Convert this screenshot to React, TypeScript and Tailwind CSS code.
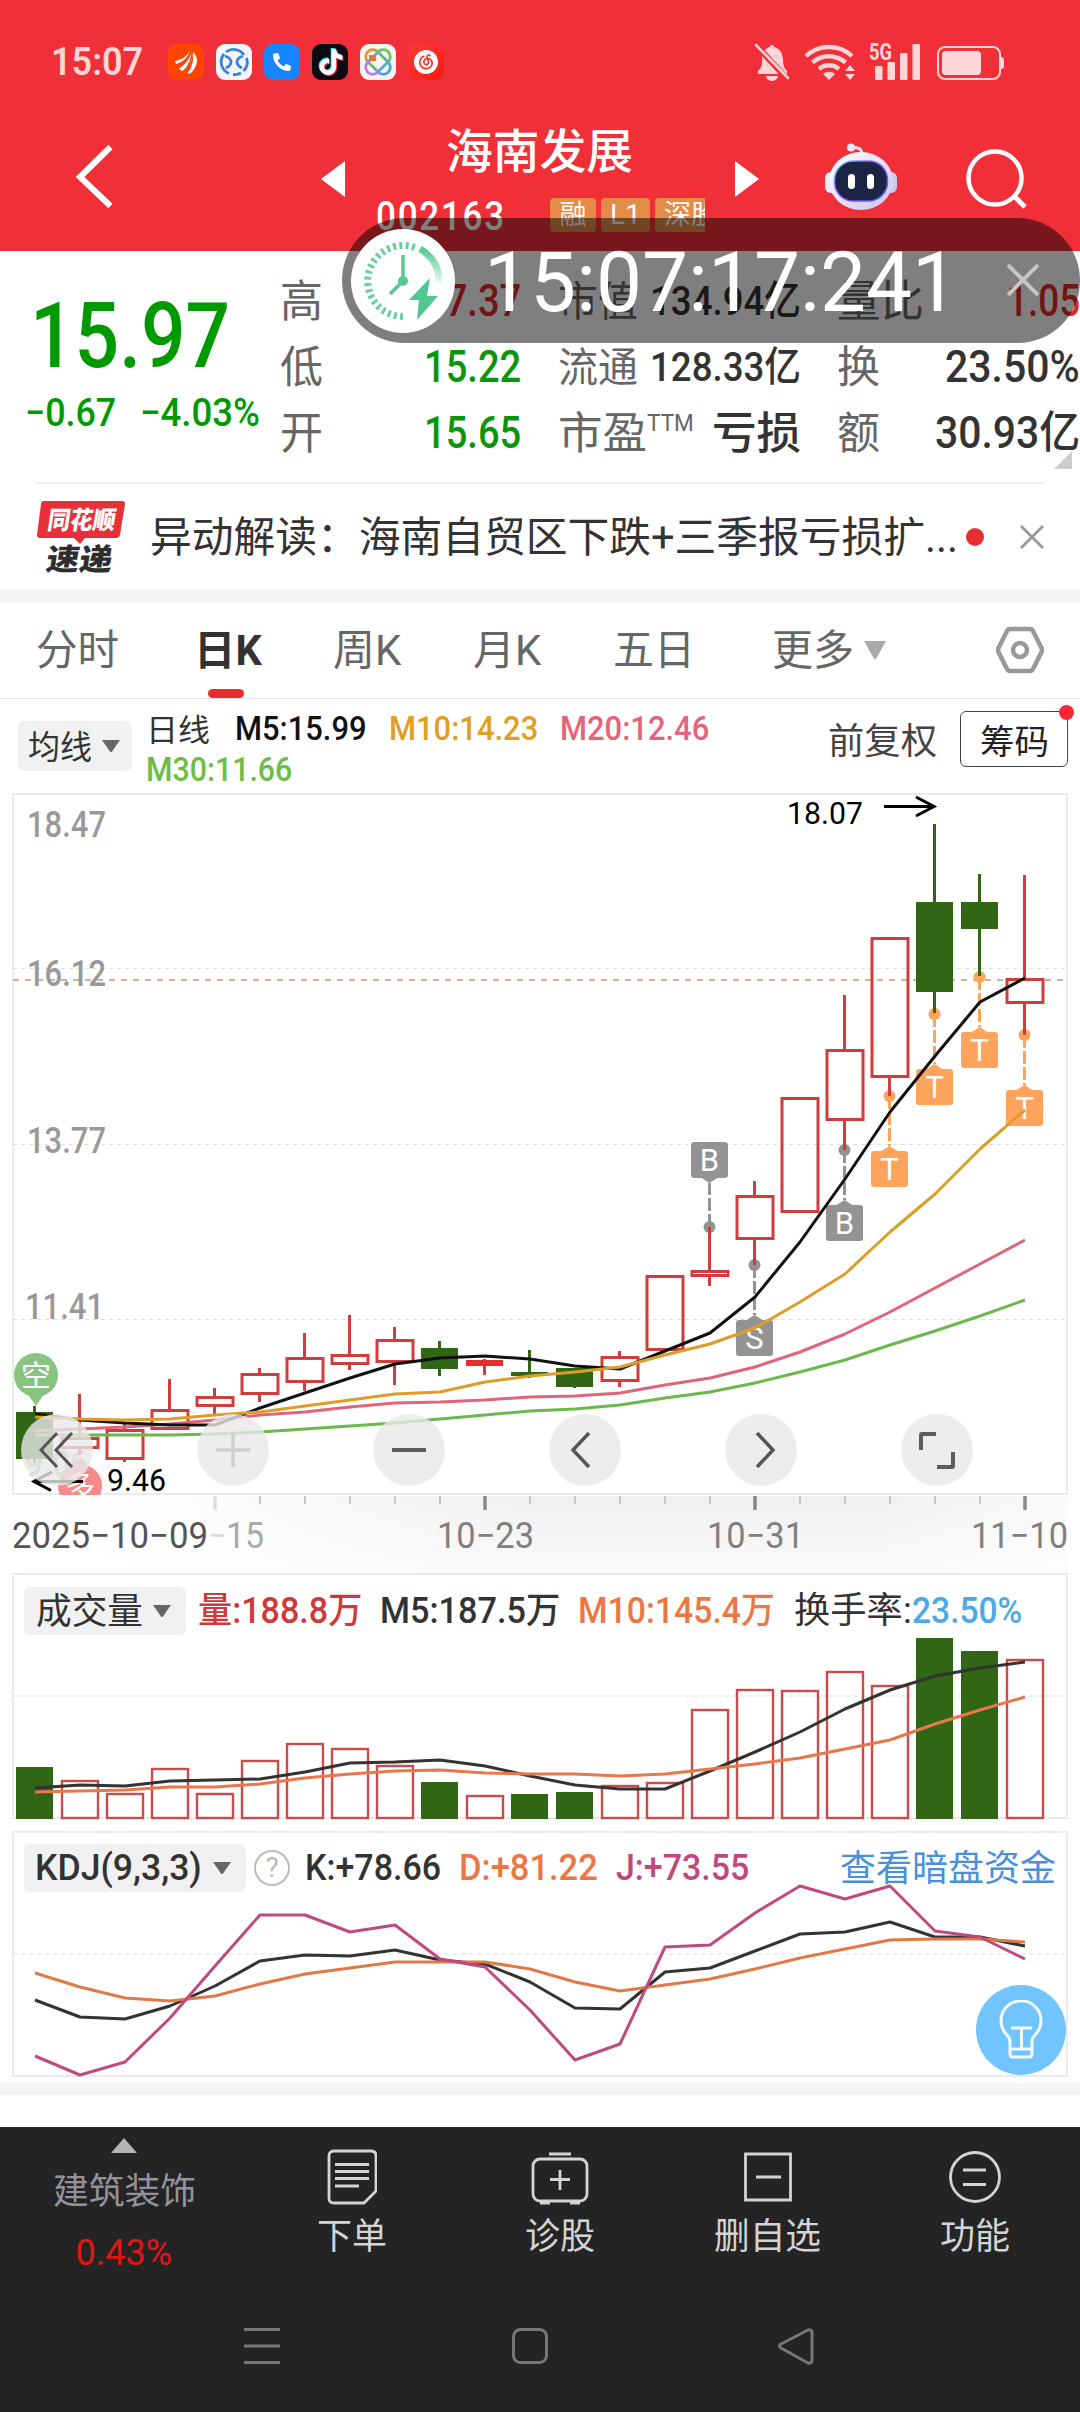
import React, { useLayoutEffect, useRef, useState } from 'react';
import { FaTiktok, FaPhone } from 'react-icons/fa';
import { SiNeteasecloudmusic } from 'react-icons/si';

// Squeezes a run of text horizontally so that it fills the width of its box
function Fit({ className, children }: { className: string; children: React.ReactNode }) {
  const outer = useRef<HTMLSpanElement>(null);
  const inner = useRef<HTMLSpanElement>(null);
  const [scale, setScale] = useState(1);

  useLayoutEffect(() => {
    if (!outer.current || !inner.current) return;
    setScale(outer.current.clientWidth / inner.current.offsetWidth);
  }, [children]);

  return (
    <span ref={outer} className={`block shrink-0 whitespace-nowrap leading-none ${className}`}>
      <span ref={inner} className="inline-block origin-left" style={{ transform: `scaleX(${scale})` }}>
        {children}
      </span>
    </span>
  );
}

type Candle = { up: boolean; high: number; top: number; bottom: number; low: number; filled?: boolean };

const candles: Candle[] = [
  { up: false, high: 1406, top: 1412, bottom: 1459, low: 1463 },
  { up: true, high: 1394, top: 1437, bottom: 1449, low: 1455 },
  { up: true, high: 1424, top: 1429, bottom: 1460, low: 1462 },
  { up: true, high: 1379, top: 1409, bottom: 1430, low: 1430 },
  { up: true, high: 1388, top: 1396, bottom: 1407, low: 1414 },
  { up: true, high: 1368, top: 1373, bottom: 1395, low: 1402 },
  { up: true, high: 1333, top: 1357, bottom: 1383, low: 1391 },
  { up: true, high: 1315, top: 1354, bottom: 1365, low: 1370 },
  { up: true, high: 1327, top: 1339, bottom: 1363, low: 1385 },
  { up: false, high: 1341, top: 1348, bottom: 1369, low: 1376 },
  { up: true, high: 1359, top: 1360, bottom: 1366, low: 1375, filled: true },
  { up: false, high: 1350, top: 1372, bottom: 1376, low: 1378 },
  { up: false, high: 1368, top: 1368, bottom: 1387, low: 1388 },
  { up: true, high: 1351, top: 1356, bottom: 1382, low: 1387 },
  { up: true, high: 1275, top: 1275, bottom: 1351, low: 1351 },
  { up: true, high: 1227, top: 1270, bottom: 1277, low: 1286 },
  { up: true, high: 1181, top: 1195, bottom: 1240, low: 1265 },
  { up: true, high: 1097, top: 1097, bottom: 1213, low: 1213 },
  { up: true, high: 995, top: 1049, bottom: 1121, low: 1150 },
  { up: true, high: 937, top: 937, bottom: 1078, low: 1096 },
  { up: false, high: 824, top: 902, bottom: 992, low: 1013 },
  { up: false, high: 874, top: 902, bottom: 929, low: 976 },
  { up: true, high: 875, top: 978, bottom: 1004, low: 1035 },
];

const volumeTops = [
  1767, 1780, 1793, 1768, 1793, 1760, 1743, 1748, 1765, 1782, 1795, 1794, 1792, 1785, 1782, 1709, 1689, 1690, 1671,
  1685, 1638, 1651, 1659,
];

const ma5 = [
  1414, 1420, 1423, 1425, 1425, 1408, 1393, 1378, 1364, 1358, 1356, 1359, 1366, 1369, 1351, 1333, 1297, 1242, 1179,
  1112, 1056, 1002, 978,
];
const ma10 = [
  1417, 1419, 1420, 1419, 1415, 1412, 1406, 1400, 1394, 1392, 1382, 1376, 1372, 1367, 1355, 1344, 1328, 1302, 1274,
  1232, 1194, 1149, 1110,
];
const ma20 = [
  1431, 1429, 1427, 1424, 1420, 1415, 1412, 1407, 1403, 1402, 1400, 1397, 1396, 1393, 1385, 1378, 1367, 1352, 1334,
  1312, 1288, 1264, 1240,
];
const ma30 = [
  1435, 1435, 1435, 1435, 1434, 1432, 1429, 1426, 1423, 1419, 1415, 1411, 1409, 1405, 1398, 1392, 1383, 1372, 1360,
  1345, 1331, 1316, 1300,
];
const vol5 = [
  1788, 1785, 1786, 1781, 1780, 1779, 1772, 1763, 1762, 1760, 1766, 1776, 1785, 1789, 1789, 1771, 1752, 1732, 1709,
  1690, 1676, 1668, 1662,
];
const vol10 = [
  1792, 1791, 1790, 1787, 1787, 1784, 1778, 1774, 1771, 1770, 1773, 1774, 1774, 1776, 1774, 1769, 1764, 1758, 1749,
  1740, 1724, 1710, 1697,
];
const kLine = [
  2000, 2017, 2019, 2006, 1986, 1961, 1955, 1956, 1950, 1960, 1964, 1982, 2008, 2009, 1972, 1968, 1951, 1934, 1932,
  1922, 1937, 1937, 1946,
];
const dLine = [
  1973, 1987, 1998, 2001, 1996, 1984, 1974, 1968, 1962, 1962, 1962, 1969, 1982, 1991, 1985, 1979, 1969, 1958, 1949,
  1940, 1939, 1939, 1942,
];
const jLine = [
  2056, 2075, 2062, 2018, 1966, 1915, 1915, 1932, 1925, 1959, 1967, 2010, 2060, 2044, 1947, 1945, 1913, 1886, 1899,
  1886, 1931, 1937, 1959,
];

const marks = [
  { i: 15, dot: 1227, letter: 'B', above: true, color: '#939393' },
  { i: 16, dot: 1265, letter: 'S', above: false, color: '#939393' },
  { i: 18, dot: 1150, letter: 'B', above: false, color: '#939393' },
  { i: 19, dot: 1096, letter: 'T', above: false, color: '#ffa45c' },
  { i: 20, dot: 1014, letter: 'T', above: false, color: '#ffa45c' },
  { i: 21, dot: 977, letter: 'T', above: false, color: '#ffa45c' },
  { i: 22, dot: 1035, letter: 'T', above: false, color: '#ffa45c' },
];

const RED = '#d23c3c';
const GREEN = '#306614';

const xOf = (i: number) => 35 + i * 45;

function Line({ data, color }: { data: number[]; color: string }) {
  return (
    <polyline
      points={data.map((y, i) => `${xOf(i)},${y}`).join(' ')}
      fill="none"
      stroke={color}
      strokeWidth={3}
      strokeLinejoin="round"
    />
  );
}

function StatusBar() {
  return (
    <div className="flex h-[124px] items-center pl-[51px]">
      <Fit className="w-[92px] text-[38px] font-semibold text-[#ffd5d7]">15:07</Fit>
      <div className="ml-[25px] flex gap-3">
        <span className="flex size-9 items-center justify-center rounded-[9px] bg-[#ff4400]">
          <svg viewBox="0 0 36 36" className="size-9" fill="#fff">
            <path d="M7 17c6-1 11-4 15-10-1 7-7 12-14 13z" />
            <path d="M11 25c6-5 11-10 13-18 2 8-3 16-10 20z" />
            <path d="M19 30c5-7 7-13 6-22 6 6 5 14-2 21z" />
            <path d="M8 21c7-2 12-7 15-14M15 28c6-6 9-12 9-20" stroke="#ff4400" strokeWidth="1.300" fill="none" />
          </svg>
        </span>
        <span className="flex size-9 items-center justify-center rounded-[9px] bg-[#f2f5fa]">
          <svg viewBox="0 0 36 36" className="size-9" fill="none" stroke="#3b83d8" strokeWidth="2.800">
            <path d="M10 8a12.500 12.500 0 0 1 18 3M30.500 14a12.500 12.500 0 0 1-3 13M25 29a12.500 12.500 0 0 1-8 1.500M13 29.500A12.500 12.500 0 0 1 8 10" />
            <path d="M9 12c3 1 6 3 6 6s-3 5-5 6M27 12c-3 1-6 3-6 6s3 5 5 6" />
          </svg>
        </span>
        <span className="flex size-9 items-center justify-center rounded-[9px] bg-[#1685ff]">
          <FaPhone className="size-[18px] -scale-x-100 text-white" />
        </span>
        <span className="relative flex size-9 items-center justify-center rounded-[9px] bg-[#0b0a14]">
          <FaTiktok className="absolute left-[5px] top-[4px] size-[26px] text-[#3de8e4]" />
          <FaTiktok className="absolute left-[7px] top-[6px] size-[26px] text-[#f5385c]" />
          <FaTiktok className="absolute left-[6px] top-[5px] size-[26px] text-white" />
        </span>
        <span className="flex size-9 items-center justify-center rounded-[9px] bg-[#f7f5f4]">
          <svg viewBox="0 0 36 36" className="size-9" fill="none" strokeWidth="2.800">
            <defs>
              <linearGradient id="orbit" x1="0" y1="0" x2="1" y2="0">
                <stop offset="0" stopColor="#f6932d" />
                <stop offset="0.500" stopColor="#58bf6c" />
                <stop offset="1" stopColor="#3aa6ee" />
              </linearGradient>
              <linearGradient id="orbit2" x1="1" y1="0" x2="0" y2="0">
                <stop offset="0" stopColor="#6fcb4b" />
                <stop offset="0.500" stopColor="#5a9ff0" />
                <stop offset="1" stopColor="#d277ea" />
              </linearGradient>
            </defs>
            <rect x="3.500" y="11" width="29" height="14" rx="7" transform="rotate(45 18 18)" stroke="url(#orbit)" />
            <rect x="3.500" y="11" width="29" height="14" rx="7" transform="rotate(-45 18 18)" stroke="url(#orbit2)" />
            <rect x="9" y="11" width="7" height="6" fill="#f0742c" />
          </svg>
        </span>
        <span className="flex size-9 items-center justify-center rounded-[9px] bg-linear-to-br from-[#fb3a34] to-[#fd120e]">
          <SiNeteasecloudmusic className="size-6 text-white" />
        </span>
      </div>
      <svg viewBox="750 38 260 48" className="ml-[306px] h-12 w-[260px]" fill="#ffd5d7">
        <path d="M758 71c5-4 4-9 4-14 1-6 4-9 8-10a2 2 0 0 1 4 0c6 2 8 5 9 12 0 6 1 9 4 12v3h-29z" />
        <path d="M766 76h12a6 5 0 0 1-12 0z" />
        <path d="M754 43l36 39" stroke="#f12f38" strokeWidth="6" />
        <path d="M756 45l32 33" stroke="#ffd5d7" strokeWidth="2.600" strokeLinecap="round" />
        <g fill="none" stroke="#ffd5d7" strokeWidth="4.400">
          <path d="M806 56a34 34 0 0 1 46 0" />
          <path d="M812.500 62.500a25 25 0 0 1 33 0" />
          <path d="M819 69a15 15 0 0 1 20 0" />
        </g>
        <path d="M829 80l-6-6a9 9 0 0 1 12 0z" />
        <path d="M845 71l5-6 5 6zM845 74h10l-5 6z" />
        <rect x="875" y="66" width="7.500" height="14" rx="1" />
        <rect x="887.500" y="62" width="7.500" height="18" rx="1" />
        <rect x="900" y="53" width="7.500" height="27" rx="1" />
        <rect x="912.500" y="44" width="7.500" height="36" rx="1" />
        <text x="869" y="60" fontSize="23" fontWeight="700" textLength="23" lengthAdjust="spacingAndGlyphs">5G</text>
        <rect x="938" y="47" width="62" height="32" rx="7" fill="none" stroke="#ffd5d7" strokeWidth="2" />
        <rect x="942" y="51" width="39" height="24" rx="4" />
        <path d="M1001 57q3 0 3 3v6q0 3-3 3z" />
      </svg>
    </div>
  );
}

function TitleBar() {
  return (
    <div className="flex h-[127px] items-start">
      <svg viewBox="0 0 44 70" className="ml-[72px] mt-[17px] h-[70px] w-11" fill="none" stroke="#fff" strokeWidth="6">
        <path d="M38.500 6L8 36l30.500 29" />
      </svg>
      <svg viewBox="0 0 24 36" className="ml-[205px] mt-[37px] h-9 w-6" fill="#fff">
        <path d="M24 0v36L0 18z" />
      </svg>
      <div className="ml-[31px] w-[329px]">
        <Fit className="ml-[70px] mt-[4px] h-12 w-[187px] text-[47px] font-medium text-white">海南发展</Fit>
        <div className="mt-[17px] flex h-11 items-center text-white">
          <Fit className="mt-[2px] w-[130px] text-[41px] font-medium tracking-[2px]">002163</Fit>
          <div className="ml-[44px] flex w-[155px] gap-[5px] overflow-hidden leading-none">
            <span className="flex h-[34px] w-[46px] shrink-0 items-center justify-center rounded-[4px] bg-[#e48b48] text-[27px]">融</span>
            <span className="flex h-[34px] w-[49px] shrink-0 items-center justify-center rounded-[4px] bg-[#e48b48] text-[28px]">L1</span>
            <span className="flex h-[34px] w-[72px] shrink-0 items-center justify-center rounded-[4px] bg-[#e48b48] text-[27px]">深股</span>
          </div>
        </div>
      </div>
      <svg viewBox="0 0 24 36" className="ml-[30px] mt-[37px] h-9 w-6" fill="#fff">
        <path d="M0 0l24 18L0 36z" />
      </svg>
      <svg viewBox="0 0 72 68" className="ml-[66px] mt-[18px] h-[68px] w-[72px]">
        <defs>
          <linearGradient id="shell" x1="0" y1="0" x2="1" y2="1">
            <stop offset="0" stopColor="#fff" />
            <stop offset="1" stopColor="#c9c6f0" />
          </linearGradient>
          <linearGradient id="rim" x1="0" y1="0" x2="1" y2="1">
            <stop offset="0" stopColor="#6fd6f2" />
            <stop offset="0.500" stopColor="#8a3df0" />
            <stop offset="1" stopColor="#5a6cf0" />
          </linearGradient>
        </defs>
        <path d="M27 6q10-2 10 7" fill="none" stroke="#e9e6ff" strokeWidth="3" />
        <circle cx="26" cy="5.500" r="4" fill="#ece4f8" />
        <rect x="0" y="30" width="12" height="21" rx="6" fill="#ece8fb" />
        <rect x="60" y="30" width="12" height="21" rx="6" fill="#cfcaf2" />
        <ellipse cx="36" cy="39" rx="32" ry="29" fill="url(#shell)" />
        <rect x="9.500" y="19" width="53" height="40" rx="19" fill="#1c2444" stroke="url(#rim)" strokeWidth="1.500" />
        <rect x="23" y="32" width="7" height="15" rx="3.500" fill="#fff" />
        <rect x="42" y="32" width="7" height="15" rx="3.500" fill="#fff" />
      </svg>
      <svg viewBox="0 0 64 64" className="ml-[68px] mt-[23px] size-16" fill="none" stroke="#fff" strokeWidth="4.500">
        <circle cx="30" cy="31" r="26.500" />
        <path d="M49 49l11 11" strokeWidth="5" />
      </svg>
    </div>
  );
}

// Floating clock that sits on top of the page
function FloatingClock() {
  return (
    <div className="absolute left-[342px] top-[218px] flex h-[125px] w-[738px] items-center rounded-full bg-black/50">
      <svg viewBox="0 0 104 104" className="ml-[9px] size-[104px]">
        <defs>
          <linearGradient id="arc" x1="0" y1="0" x2="0" y2="1">
            <stop offset="0" stopColor="#56c992" />
            <stop offset="1" stopColor="#56c992" stopOpacity="0.100" />
          </linearGradient>
        </defs>
        <circle cx="52" cy="52" r="52" fill="#fff" />
        <path d="M52 87.500a35.500 35.500 0 1 1 12-69" fill="none" stroke="#6bce9f" strokeWidth="7" strokeDasharray="3 3.300" />
        <path d="M69 20a36 36 0 0 1 19 34" fill="none" stroke="url(#arc)" strokeWidth="7" />
        <path d="M52 26v26L39 65" fill="none" stroke="#56c992" strokeWidth="3.500" />
        <circle cx="52" cy="52" r="5" fill="#56c992" />
        <path d="M79 49L58 71h10l-2 20 21-24H76z" fill="#50c78e" />
      </svg>
      <Fit className="ml-[29px] mt-1 w-[474px] text-[83px] text-white">15:07:17:241</Fit>
      <svg viewBox="0 0 32 32" className="ml-[49px] mb-0.5 size-8" stroke="#c6c6c6" strokeWidth="4">
        <path d="M1 1l30 30M31 1L1 31" />
      </svg>
    </div>
  );
}

function Quote() {
  return (
    <div className="relative flex h-[231px]">
      <div className="w-[280px] pl-[27px] pt-[40px] text-[#009a00]">
        <Fit className="ml-[3px] h-[91px] w-[200px] text-[91px] font-medium">15.97</Fit>
        <div className="mt-[11px] flex h-10 items-center text-[39px] font-medium">
          <Fit className="-ml-[2px] w-[91px]">−0.67</Fit>
          <Fit className="ml-[24px] w-[120px]">−4.03%</Fit>
        </div>
      </div>
      <div className="flex gap-9 pt-[17px] text-[#333]">
        <div className="w-[241px] text-[44px]">
          <div className="flex h-[66px] items-center justify-between">
            <Fit className="mt-[2px] w-[43px] text-[#666]">高</Fit>
            <Fit className="w-[97px] font-medium text-[#e02828]">17.37</Fit>
          </div>
          <div className="flex h-[66px] items-center justify-between">
            <Fit className="mt-[2px] w-[43px] text-[#666]">低</Fit>
            <Fit className="w-[97px] font-medium text-[#0a960a]">15.22</Fit>
          </div>
          <div className="flex h-[66px] items-center justify-between">
            <Fit className="mt-[2px] w-[43px] text-[#666]">开</Fit>
            <Fit className="w-[97px] font-medium text-[#0a960a]">15.65</Fit>
          </div>
        </div>
        <div className="ml-px w-[243px] text-[41px]">
          <div className="flex h-[66px] items-center justify-between">
            <Fit className="mt-[2px] w-[80px] text-[#666]">市值</Fit>
            <Fit className="w-[151px] font-medium">134.94亿</Fit>
          </div>
          <div className="flex h-[66px] items-center justify-between">
            <Fit className="mt-[2px] w-[80px] text-[#666]">流通</Fit>
            <Fit className="w-[151px] font-medium">128.33亿</Fit>
          </div>
          <div className="flex h-[66px] items-center justify-between">
            <div className="flex items-start text-[#666]">
              <Fit className="mt-[2px] w-[89px] text-[44px]">市盈</Fit>
              <Fit className="mt-[1px] w-[47px] text-[24px]">TTM</Fit>
            </div>
            <Fit className="mt-[2px] w-[89px] text-[44px] font-medium">亏损</Fit>
          </div>
        </div>
        <div className="w-[243px] text-[44px]">
          <div className="flex h-[66px] items-center justify-between">
            <Fit className="mt-[2px] w-[87px] text-[#666]">量比</Fit>
            <Fit className="w-[73px] font-medium text-[#e02828]">1.05</Fit>
          </div>
          <div className="flex h-[66px] items-center justify-between">
            <Fit className="mt-[2px] w-[43px] text-[#666]">换</Fit>
            <Fit className="w-[135px] font-medium">23.50%</Fit>
          </div>
          <div className="flex h-[66px] items-center justify-between">
            <Fit className="mt-[2px] w-[43px] text-[#666]">额</Fit>
            <Fit className="w-[145px] font-medium">30.93亿</Fit>
          </div>
        </div>
      </div>
      <svg viewBox="0 0 18 18" className="absolute bottom-[13px] right-2 size-[18px]" fill="#ccc">
        <path d="M18 0v18H0z" />
      </svg>
    </div>
  );
}

function News() {
  return (
    <div className="mx-9 flex h-[108px] items-center border-t-2 border-[#eee]">
      <div className="w-[90px]">
        <svg viewBox="0 0 90 74" className="h-[74px] w-[90px]">
          <path d="M8 1h78q3 0 3 3l-5 31q-1 3-4 3H49l-5 6-6-6H4q-3 0-3-3L5 4q0-3 3-3z" fill="#e6303a" />
          <g fontWeight="900" transform="skewX(-9)">
            <text x="15" y="29" fontSize="25" fill="#fff" textLength="68" lengthAdjust="spacingAndGlyphs">同花顺</text>
            <text x="20" y="70" fontSize="30" fill="#2e2e2e" textLength="66" lengthAdjust="spacingAndGlyphs">速递</text>
          </g>
        </svg>
      </div>
      <Fit className="ml-[24px] mt-[2px] w-[808px] text-[42px] text-[#333]">异动解读：海南自贸区下跌+三季报亏损扩...</Fit>
      <span className="ml-[8px] size-[18px] rounded-full bg-[#e93030]" />
      <svg viewBox="0 0 24 24" className="ml-auto size-6" stroke="#999" strokeWidth="2.800">
        <path d="M1 1l22 22M23 1L1 23" />
      </svg>
    </div>
  );
}

function Tabs() {
  return (
    <div className="relative flex h-[97px] items-center border-b border-[#e4e4e4] pl-[36px] text-[42px] text-[#666]">
      <Fit className="mt-[2px] w-[83px]">分时</Fit>
      <Fit className="ml-[75px] mt-[2px] w-[68px] font-bold text-[#333]">日K</Fit>
      <Fit className="ml-[71px] mt-[2px] w-[68px]">周K</Fit>
      <Fit className="ml-[72px] mt-[2px] w-[68px]">月K</Fit>
      <Fit className="ml-[72px] mt-[2px] w-[82px]">五日</Fit>
      <Fit className="ml-[77px] mt-[2px] w-[82px]">更多</Fit>
      <svg viewBox="0 0 22 18" className="ml-[10px] h-[18px] w-[22px]" fill="#aaa">
        <path d="M0 0h22L12.500 17q-1.500 2-3 0z" />
      </svg>
      <svg viewBox="0 0 48 48" className="ml-[110px] size-12" fill="none" stroke="#999" strokeWidth="4.500" strokeLinejoin="round">
        <path d="M14 3h20q2 0 3 2l8 16q2 3 0 6l-8 16q-1 2-3 2H14q-2 0-3-2L3 27q-2-3 0-6l8-16q1-2 3-2z" />
        <circle cx="24" cy="24" r="7" />
      </svg>
      <span className="absolute bottom-0 left-[208px] h-[9px] w-9 rounded-full bg-[#e62e2e]" />
    </div>
  );
}

function Caret() {
  return (
    <svg viewBox="0 0 18 12" className="h-3 w-[18px]" fill="#666">
      <path d="M0 0h18L10 11.500q-1 1-2 0z" />
    </svg>
  );
}

function Averages() {
  return (
    <div className="flex h-[94px] items-start">
      <div className="ml-[18px] mt-[22px] flex h-[50px] w-[114px] items-center justify-between rounded-md bg-[#f1f1f1] pl-[10px] pr-3 text-[33px] text-[#333]">
        <Fit className="mt-[2px] w-[64px]">均线</Fit>
        <Caret />
      </div>
      <div className="ml-[14px] mt-[9px] flex h-[82px] w-[620px] flex-wrap content-start items-center font-medium">
        <Fit className="mr-[25px] h-[41px] w-[64px] pt-[7px] text-[31px] font-normal text-[#333]">日线</Fit>
        <Fit className="mr-[22px] h-[41px] w-[132px] pt-1 text-[33px] text-[#111]">M5:15.99</Fit>
        <Fit className="mr-[22px] h-[41px] w-[149px] pt-1 text-[33px] text-[#e09e22]">M10:14.23</Fit>
        <Fit className="h-[41px] w-[149px] pt-1 text-[33px] text-[#e5647a]">M20:12.46</Fit>
        <Fit className="h-[41px] w-[146px] pt-1 text-[33px] text-[#6cbd47]">M30:11.66</Fit>
      </div>
      <Fit className="ml-[62px] mt-[25px] w-[109px] text-[36px] text-[#444]">前复权</Fit>
      <div className="relative ml-[23px] mt-[12px] flex h-14 w-[108px] items-center justify-center rounded-[6px] border border-[#444] text-[34px] text-[#222]">
        <Fit className="mt-[5px] w-[69px]">筹码</Fit>
        <span className="absolute -right-[7px] -top-[7px] size-[15px] rounded-full bg-[#ff2436]" />
      </div>
    </div>
  );
}

const round = 'flex size-[72px] items-center justify-center rounded-full bg-[#e8e8e8]/80';

function PriceChart() {
  return (
    <div className="relative h-[703px]">
      <svg viewBox="0 793 1080 703" className="absolute inset-0 h-[703px] w-full">
        <rect x="13" y="794" width="1054" height="700" fill="none" stroke="#ebebeb" strokeWidth="2" />
        <g stroke="#dedede" strokeDasharray="4 4">
          <path d="M13 968.500H1066M13 1144.500H1066M13 1319.500H1066" />
        </g>
        <path d="M13 980H1064" stroke="#b7a06f" strokeWidth="1.500" strokeDasharray="6 6" />
        <g fill="#999" fontSize="36" fontWeight="500">
          <text x="27" y="837" textLength="79" lengthAdjust="spacingAndGlyphs">18.47</text>
          <text x="27" y="986" textLength="79" lengthAdjust="spacingAndGlyphs">16.12</text>
          <text x="27" y="1153" textLength="79" lengthAdjust="spacingAndGlyphs">13.77</text>
          <text x="25" y="1319" textLength="79" lengthAdjust="spacingAndGlyphs">11.41</text>
          <text x="25" y="1476" textLength="63" lengthAdjust="spacingAndGlyphs" fill="#bbb">9.06</text>
        </g>

        {marks.map((m) => {
          const x = xOf(m.i) - 0.5;
          const top = m.above ? m.dot - 85 : m.dot + 55;
          const tip = m.above ? top + 41 : top - 5;
          const base = m.above ? top + 36 : top;
          return (
            <g key={m.i} fill={m.color}>
              <path d={`M${x} ${m.dot}V${tip}`} stroke={m.color} strokeWidth="3" strokeDasharray="13 3" />
              <circle cx={x} cy={m.dot} r="6" />
              <rect x={x - 18.5} y={top} width="37" height="36" rx="3" />
              <path d={`M${x - 8} ${base}L${x} ${tip}L${x + 8} ${base}z`} />
              <text x={x} y={top + 29} fontSize="31" fill="#fff" textAnchor="middle">
                {m.letter}
              </text>
            </g>
          );
        })}

        {candles.map((c, i) => {
          const x = xOf(i) - 0.5;
          const color = c.up ? RED : GREEN;
          return (
            <g key={i} stroke={color} strokeWidth="3">
              <path d={`M${x} ${c.high}V${c.top}M${x} ${c.bottom}V${c.low}`} />
              {c.up && !c.filled ? (
                <rect x={x - 17.5} y={c.top + 1.5} width="36" height={c.bottom - c.top - 3} fill="none" />
              ) : (
                <rect x={x - 18.5} y={c.top} width="37" height={c.bottom - c.top} fill={c.up ? '#e03030' : color} stroke="none" />
              )}
            </g>
          );
        })}

        <Line data={ma30} color="#6bb84d" />
        <Line data={ma20} color="#e0647a" />
        <Line data={ma5} color="#111" />
        <Line data={ma10} color="#dc9e28" />

        <path d="M36 1406l-9-13h18z" fill="#86c47f" />
        <circle cx="36" cy="1375" r="22" fill="#86c47f" />
        <text x="36" y="1386" fontSize="30" fill="#fff" textAnchor="middle">空</text>
        <clipPath id="plot">
          <rect x="13" y="794" width="1054" height="701" />
        </clipPath>
        <g clipPath="url(#plot)">
          <path d="M80 1457l-9 12h18z" fill="#f58b88" />
          <circle cx="80" cy="1486" r="22" fill="#f58b88" />
          <text x="80" y="1497" fontSize="30" fill="#fff" textAnchor="middle">多</text>
        </g>

        <g fontSize="31" fill="#000">
          <text x="787" y="824" textLength="76" lengthAdjust="spacingAndGlyphs">18.07</text>
          <text x="107" y="1491" textLength="59" lengthAdjust="spacingAndGlyphs">9.46</text>
        </g>
        <g fill="none" stroke="#000" strokeWidth="3">
          <path d="M884 806.500h50M916 797l18 9.500-18 9.500" />
          <path d="M83 1481.500H35M52 1472l-18 9.500 17 9" />
        </g>
      </svg>
      <div className="absolute bottom-[10px] left-[21px] flex w-[952px] justify-between">
        <span className={round}>
          <svg viewBox="0 0 36 36" className="size-9" fill="none" stroke="#555" strokeWidth="3">
            <path d="M18 1L2 18l16 17M33 1L17 18l16 17" />
          </svg>
        </span>
        <span className={round}>
          <svg viewBox="0 0 34 34" className="size-[34px]" stroke="#cfcfcf" strokeWidth="3.500">
            <path d="M0 17h34M17 0v34" />
          </svg>
        </span>
        <span className={round}>
          <svg viewBox="0 0 34 34" className="size-[34px]" stroke="#5c5c5c" strokeWidth="4">
            <path d="M0 17h34" />
          </svg>
        </span>
        <span className={round}>
          <svg viewBox="0 0 36 36" className="size-9" fill="none" stroke="#555" strokeWidth="3.500">
            <path d="M22 1L6 18l16 17" />
          </svg>
        </span>
        <span className={round}>
          <svg viewBox="0 0 36 36" className="size-9" fill="none" stroke="#555" strokeWidth="3.500">
            <path d="M14 1l16 17-16 17" />
          </svg>
        </span>
        <span className={round}>
          <svg viewBox="0 0 38 38" className="size-[38px]" fill="none" stroke="#5c5c5c" strokeWidth="4">
            <path d="M3 19V4q0-1 1-1h14M35 21v14q0 1-1 1H19" />
          </svg>
        </span>
      </div>
    </div>
  );
}

function TimeAxis() {
  return (
    <div className="h-[77px] bg-linear-to-b from-[#f0f0f0] to-[#fafafa]">
      <svg viewBox="0 1496 1080 77" className="h-[77px] w-full">
        <defs>
          <linearGradient id="fade">
            <stop offset="0" stopColor="#fff" />
            <stop offset="0.150" stopColor="#fff" stopOpacity="0.900" />
            <stop offset="0.500" stopColor="#fff" stopOpacity="0" />
            <stop offset="0.800" stopColor="#fff" stopOpacity="0" />
            <stop offset="1" stopColor="#fff" stopOpacity="0.700" />
          </linearGradient>
        </defs>
        <rect x="0" y="1496" width="1080" height="77" fill="url(#fade)" />
        <rect x="0" y="1496" width="12" height="77" fill="#fff" />
        <rect x="1068" y="1496" width="12" height="77" fill="#fff" />
        {candles.map((_, i) => {
          if (i < 4) return null;
          const major = i % 6 === 4 || i === 22;
          return (
            <path
              key={i}
              d={`M${xOf(i)} 1495v${major ? 15 : 9}`}
              stroke={i === 4 ? '#ddd' : major ? '#888' : '#c8c8c8'}
              strokeWidth={major ? 3.5 : 2}
            />
          );
        })}
        <g fontSize="36" fill="#808080">
          <text x="12" y="1548" textLength="196" lengthAdjust="spacingAndGlyphs" fill="#555">2025−10−09</text>
          <text x="208" y="1548" textLength="18" lengthAdjust="spacingAndGlyphs" fill="#ddd">−</text>
          <text x="226" y="1548" textLength="38" lengthAdjust="spacingAndGlyphs" fill="#aaa">15</text>
          <text x="437" y="1548" textLength="97" lengthAdjust="spacingAndGlyphs">10−23</text>
          <text x="707" y="1548" textLength="97" lengthAdjust="spacingAndGlyphs">10−31</text>
          <text x="971" y="1548" textLength="97" lengthAdjust="spacingAndGlyphs">11−10</text>
        </g>
      </svg>
    </div>
  );
}

function Volume() {
  return (
    <div className="relative h-[247px]">
      <svg viewBox="0 1573 1080 247" className="absolute inset-0 h-[247px] w-full">
        <rect x="13" y="1574" width="1054" height="244" fill="#fff" stroke="#ebebeb" strokeWidth="2" />
        <path d="M13 1696H1066" stroke="#e8e8e8" strokeWidth="1.500" strokeDasharray="4 4" />
        {volumeTops.map((top, i) => {
          const x = xOf(i) - 0.5;
          return candles[i].up ? (
            <rect key={i} x={x - 17.5} y={top + 1} width="36" height={1817 - top} fill="none" stroke="#cb4a4a" strokeWidth="2.400" />
          ) : (
            <rect key={i} x={x - 18.5} y={top} width="37" height={1819 - top} fill={GREEN} />
          );
        })}
        <Line data={vol5} color="#333" />
        <Line data={vol10} color="#e8784a" />
      </svg>
      <div className="relative flex h-[75px] items-center text-[36px] font-medium text-[#333]">
        <div className="ml-6 flex h-12 w-[162px] items-center justify-between rounded-md bg-[#f1f1f1] pl-[12px] pr-[15px] font-normal">
          <Fit className="mt-[2px] w-[107px]">成交量</Fit>
          <Caret />
        </div>
        <Fit className="ml-[12px] w-[164px] text-[#cc3a3a]">量:188.8万</Fit>
        <Fit className="ml-[18px] w-[180px]">M5:187.5万</Fit>
        <Fit className="ml-[18px] w-[197px] text-[#ec7744]">M10:145.4万</Fit>
        <Fit className="ml-[19px] w-[118px] font-normal">换手率:</Fit>
        <Fit className="w-[110px] text-[#4aa9e6]">23.50%</Fit>
      </div>
    </div>
  );
}

function Kdj() {
  return (
    <div className="relative mt-[11px] h-[247px]">
      <svg viewBox="0 1831 1080 247" className="absolute inset-0 h-[247px] w-full">
        <rect x="13" y="1832" width="1054" height="244" fill="none" stroke="#ebebeb" strokeWidth="2" />
        <path d="M13 1954H1066" stroke="#e8e8e8" strokeWidth="1.500" strokeDasharray="4 4" />
        <Line data={kLine} color="#333" />
        <Line data={dLine} color="#e07848" />
        <Line data={jLine} color="#bf4a7d" />
      </svg>
      <div className="relative flex h-[73px] items-center text-[36px] font-medium text-[#333]">
        <div className="ml-6 flex h-12 w-[222px] items-center justify-between rounded-md bg-[#f1f1f1] pl-[11px] pr-[15px]">
          <Fit className="w-[167px]">KDJ(9,3,3)</Fit>
          <Caret />
        </div>
        <span className="ml-[8px] flex size-9 items-center justify-center rounded-full border-2 border-[#bbb] text-[28px] font-normal text-[#bbb]">?</span>
        <Fit className="ml-[15px] w-[136px]">K:+78.66</Fit>
        <Fit className="ml-[18px] w-[139px] text-[#ec7744]">D:+81.22</Fit>
        <Fit className="ml-[18px] w-[133px] text-[#c0487c]">J:+73.55</Fit>
        <Fit className="ml-[91px] mt-[2px] w-[216px] font-normal text-[#4a8fdc]">查看暗盘资金</Fit>
      </div>
      <span className="absolute bottom-[3px] right-[14px] flex size-[90px] items-center justify-center rounded-full bg-[#72c4ff]">
        <svg viewBox="0 0 48 60" className="h-[60px] w-12" fill="none" stroke="#f2fbff" strokeWidth="3">
          <path d="M13 50V42q0-4-3-7A20 20 0 1 1 38 35q-3 3-3 7v12q0 3-3 3H16q-3 0-3-3zM13 49h22M14 28h21M24.500 28v20" />
        </svg>
      </span>
    </div>
  );
}

function Toolbar() {
  return (
    <div className="flex h-[162px] bg-[#242424] text-[36px] text-[#d4d4d4]">
      <div className="flex w-[248px] flex-col items-center pt-[11px]">
        <svg viewBox="0 0 26 15" className="h-[15px] w-[26px]" fill="#b5b5b5">
          <path d="M13 0l13 15H0z" />
        </svg>
        <Fit className="mt-[21px] w-[143px] text-[#92929c]">建筑装饰</Fit>
        <Fit className="mt-[25px] w-[97px] text-[#e01616]">0.43%</Fit>
      </div>
      <div className="flex w-[208px] flex-col items-center pt-[22px]">
        <svg viewBox="0 0 50 56" className="h-14 w-[50px]" fill="none" stroke="#d4d4d4" strokeWidth="2.800">
          <path d="M7 2h37q5 0 5 5v35L37 54H7q-5 0-5-5V7q0-5 5-5zM8 15.500h34M8 22.500h34M8 29.500h34M8 37h24" />
        </svg>
        <Fit className="mt-[14px] w-[70px]">下单</Fit>
      </div>
      <div className="flex w-[208px] flex-col items-center pt-[22px]">
        <svg viewBox="0 0 58 56" className="h-14 w-[58px]" fill="none" stroke="#d4d4d4" strokeWidth="2.800">
          <rect x="2" y="10" width="54" height="42" rx="7" />
          <path d="M18 5h22M29 21v20M19 30.500h20" />
          <path d="M9 54h10M39 54h10" strokeWidth="3" />
        </svg>
        <Fit className="mt-[14px] w-[70px]">诊股</Fit>
      </div>
      <div className="flex w-[207px] flex-col items-center pt-[22px]">
        <svg viewBox="0 0 50 56" className="h-14 w-[50px]" fill="none" stroke="#d4d4d4" strokeWidth="2.800">
          <path d="M2.500 5h45v46h-45zM13 28h25" />
        </svg>
        <Fit className="mt-[14px] w-[107px]">删自选</Fit>
      </div>
      <div className="flex w-[208px] flex-col items-center pt-[22px]">
        <svg viewBox="0 0 52 56" className="h-14 w-[52px]" fill="none" stroke="#d4d4d4" strokeWidth="2.800">
          <circle cx="26" cy="28" r="24.500" />
          <path d="M14 21h23M14 35.500h23" />
        </svg>
        <Fit className="mt-[14px] w-[70px]">功能</Fit>
      </div>
    </div>
  );
}

function SystemNav() {
  return (
    <div className="flex h-[123px] items-start bg-[#242424] pt-[37px]">
      <svg viewBox="0 0 40 40" className="ml-[242px] size-10" stroke="#777" strokeWidth="3">
        <path d="M2 3.500h36M2 20h36M2 36.500h36" />
      </svg>
      <svg viewBox="0 0 40 40" className="ml-[228px] size-10" fill="none" stroke="#777" strokeWidth="3">
        <rect x="3.500" y="3.500" width="33" height="33" rx="7" />
      </svg>
      <svg viewBox="0 0 40 40" className="ml-[227px] size-10" fill="none" stroke="#777" strokeWidth="3" strokeLinejoin="round">
        <path d="M4 18L31 4q4-1 4 3v27q0 4-4 3L4 22q-3-2 0-4z" />
      </svg>
    </div>
  );
}

export default function App() {
  return (
    <div className="relative h-[2412px] w-[1080px] overflow-hidden bg-white font-[Roboto,'Noto_Sans_CJK_SC',sans-serif]">
      <div className="bg-[#f12f38]">
        <StatusBar />
        <TitleBar />
      </div>
      <Quote />
      <News />
      <div className="h-3 bg-[#f4f4f4]" />
      <Tabs />
      <Averages />
      <PriceChart />
      <TimeAxis />
      <Volume />
      <Kdj />
      <div className="mt-[5px] h-3 bg-[#f4f4f4]" />
      <div className="h-8" />
      <Toolbar />
      <SystemNav />
      <FloatingClock />
    </div>
  );
}
